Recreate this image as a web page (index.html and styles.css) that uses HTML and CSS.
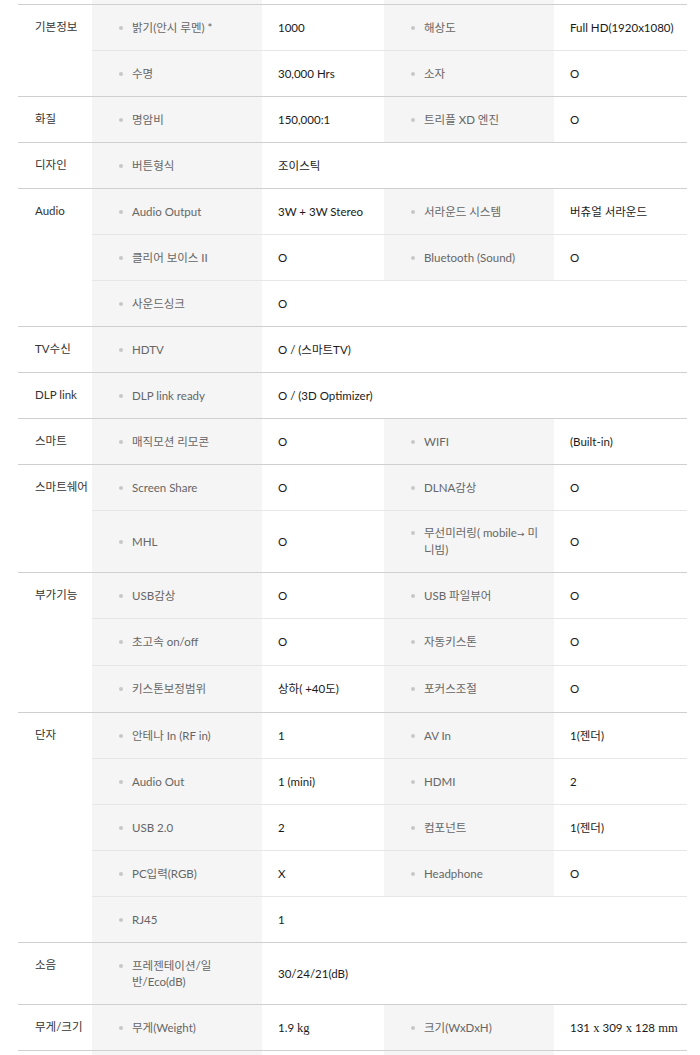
FILE: index.html
```html
<!DOCTYPE html>
<html lang="ko">
<head>
<meta charset="utf-8">
<title>제품 사양</title>
<link rel="stylesheet" href="styles.css">
</head>
<body>
<div class="spec">
<table class="spec-table">
  <colgroup>
    <col class="c-cat"><col class="c-lab"><col class="c-val"><col class="c-lab2"><col class="c-val2">
  </colgroup>
  <tbody>
    <tr class="pad-top"><td></td><td class="lab"></td><td></td><td class="lab"></td><td></td></tr>

    <tr class="first">
      <th class="cat" rowspan="2">기본정보</th>
      <td class="lab"><span class="dot"></span><span class="txt">밝기(안시 루멘) *</span></td>
      <td class="val">1000</td>
      <td class="lab"><span class="dot"></span><span class="txt">해상도</span></td>
      <td class="val">Full HD(1920x1080)</td>
    </tr>
    <tr class="last">
      <td class="lab"><span class="dot"></span><span class="txt">수명</span></td>
      <td class="val">30,000 Hrs</td>
      <td class="lab"><span class="dot"></span><span class="txt">소자</span></td>
      <td class="val">O</td>
    </tr>

    <tr class="last">
      <th class="cat">화질</th>
      <td class="lab"><span class="dot"></span><span class="txt">명암비</span></td>
      <td class="val">150,000:1</td>
      <td class="lab"><span class="dot"></span><span class="txt">트리플 XD 엔진</span></td>
      <td class="val">O</td>
    </tr>

    <tr class="last">
      <th class="cat">디자인</th>
      <td class="lab"><span class="dot"></span><span class="txt">버튼형식</span></td>
      <td class="val" colspan="3">조이스틱</td>
    </tr>

    <tr>
      <th class="cat" rowspan="3">Audio</th>
      <td class="lab"><span class="dot"></span><span class="txt">Audio Output</span></td>
      <td class="val">3W + 3W Stereo</td>
      <td class="lab"><span class="dot"></span><span class="txt">서라운드 시스템</span></td>
      <td class="val">버츄얼 서라운드</td>
    </tr>
    <tr>
      <td class="lab"><span class="dot"></span><span class="txt">클리어 보이스 II</span></td>
      <td class="val">O</td>
      <td class="lab"><span class="dot"></span><span class="txt">Bluetooth (Sound)</span></td>
      <td class="val">O</td>
    </tr>
    <tr class="last">
      <td class="lab"><span class="dot"></span><span class="txt">사운드싱크</span></td>
      <td class="val" colspan="3">O</td>
    </tr>

    <tr class="last">
      <th class="cat">TV수신</th>
      <td class="lab"><span class="dot"></span><span class="txt">HDTV</span></td>
      <td class="val" colspan="3">O / (스마트TV)</td>
    </tr>

    <tr class="last">
      <th class="cat">DLP link</th>
      <td class="lab"><span class="dot"></span><span class="txt">DLP link ready</span></td>
      <td class="val" colspan="3">O / (3D Optimizer)</td>
    </tr>

    <tr class="last">
      <th class="cat">스마트</th>
      <td class="lab"><span class="dot"></span><span class="txt">매직모션 리모콘</span></td>
      <td class="val">O</td>
      <td class="lab"><span class="dot"></span><span class="txt">WIFI</span></td>
      <td class="val">(Built-in)</td>
    </tr>

    <tr>
      <th class="cat" rowspan="2">스마트쉐어</th>
      <td class="lab"><span class="dot"></span><span class="txt">Screen Share</span></td>
      <td class="val">O</td>
      <td class="lab"><span class="dot"></span><span class="txt">DLNA감상</span></td>
      <td class="val">O</td>
    </tr>
    <tr class="last tall">
      <td class="lab"><span class="dot"></span><span class="txt">MHL</span></td>
      <td class="val">O</td>
      <td class="lab"><span class="dot"></span><span class="txt nowrap">무선미러링( mobile<span class="arrow">→</span> 미<br>니빔)</span></td>
      <td class="val">O</td>
    </tr>

    <tr>
      <th class="cat" rowspan="3">부가기능</th>
      <td class="lab"><span class="dot"></span><span class="txt">USB감상</span></td>
      <td class="val">O</td>
      <td class="lab"><span class="dot"></span><span class="txt">USB 파일뷰어</span></td>
      <td class="val">O</td>
    </tr>
    <tr class="plus1">
      <td class="lab"><span class="dot"></span><span class="txt">초고속 on/off</span></td>
      <td class="val">O</td>
      <td class="lab"><span class="dot"></span><span class="txt">자동키스톤</span></td>
      <td class="val">O</td>
    </tr>
    <tr class="last plus1">
      <td class="lab"><span class="dot"></span><span class="txt">키스톤보정범위</span></td>
      <td class="val">상하( +40도)</td>
      <td class="lab"><span class="dot"></span><span class="txt">포커스조절</span></td>
      <td class="val">O</td>
    </tr>

    <tr>
      <th class="cat" rowspan="5">단자</th>
      <td class="lab"><span class="dot"></span><span class="txt">안테나 In (RF in)</span></td>
      <td class="val">1</td>
      <td class="lab"><span class="dot"></span><span class="txt">AV In</span></td>
      <td class="val">1(젠더)</td>
    </tr>
    <tr>
      <td class="lab"><span class="dot"></span><span class="txt">Audio Out</span></td>
      <td class="val">1 (mini)</td>
      <td class="lab"><span class="dot"></span><span class="txt">HDMI</span></td>
      <td class="val">2</td>
    </tr>
    <tr>
      <td class="lab"><span class="dot"></span><span class="txt">USB 2.0</span></td>
      <td class="val">2</td>
      <td class="lab"><span class="dot"></span><span class="txt">컴포넌트</span></td>
      <td class="val">1(젠더)</td>
    </tr>
    <tr>
      <td class="lab"><span class="dot"></span><span class="txt">PC입력(RGB)</span></td>
      <td class="val">X</td>
      <td class="lab"><span class="dot"></span><span class="txt">Headphone</span></td>
      <td class="val">O</td>
    </tr>
    <tr class="last">
      <td class="lab"><span class="dot"></span><span class="txt">RJ45</span></td>
      <td class="val" colspan="3">1</td>
    </tr>

    <tr class="last tall">
      <th class="cat">소음</th>
      <td class="lab"><span class="dot"></span><span class="txt nowrap">프레젠테이션/일<br>반/Eco(dB)</span></td>
      <td class="val" colspan="3">30/24/21(dB)</td>
    </tr>

    <tr class="last">
      <th class="cat">무게/크기</th>
      <td class="lab"><span class="dot"></span><span class="txt">무게(Weight)</span></td>
      <td class="val">1.9 <span class="serif">kg</span></td>
      <td class="lab"><span class="dot"></span><span class="txt">크기(WxDxH)</span></td>
      <td class="val">131<span class="serif"> x </span>309<span class="serif"> x </span>128<span class="serif"> mm</span></td>
    </tr>

    <tr class="pad-bottom"><td></td><td class="lab"></td><td></td><td class="lab"></td><td></td></tr>
  </tbody>
</table>
</div>
</body>
</html>
```

FILE: styles.css
```css
html, body {
  margin: 0;
  padding: 0;
  background: #fff;
}

.spec {
  padding: 0 13px 0 18px;
  font-family: "Lato", "Noto Sans CJK KR", "Noto Sans", sans-serif;
  font-size: 11.5px;
  line-height: 16px;
}

.spec-table {
  width: 669px;
  border-collapse: collapse;
  table-layout: fixed;
}

.c-cat { width: 74px; }
.c-lab { width: 170px; }
.c-val { width: 122px; }
.c-lab2 { width: 170px; }
.c-val2 { width: 133px; }

.spec-table td {
  padding: 0;
  height: 45px;
  border-bottom: 1px solid #e6e6e6;
  vertical-align: middle;
  text-align: left;
  font-weight: normal;
}

.spec-table tr.plus1 td {
  height: 46px;
}

.spec-table tr.tall td {
  height: 61px;
}

.spec-table tr.last td,
.spec-table th.cat {
  border-bottom: 1px solid #cfcfcf;
}

.spec-table tr.first td,
.spec-table tr.first th {
  border-top: 1px solid #cfcfcf;
}

.pad-top td {
  height: 4px !important;
  border-bottom: 0 !important;
}

.pad-bottom td {
  height: 12px !important;
  border-bottom: 0 !important;
}

th.cat {
  height: auto;
  vertical-align: top;
  text-align: left;
  font-weight: normal;
  padding: 14px 0 0 17px;
  color: #333;
}

.lab {
  background: #f5f5f5;
  color: #666;
}

td.lab {
  padding: 0 14px 0 27px;
}

.lab .txt {
  display: block;
  margin-left: 13px;
}

.lab .nowrap {
  white-space: nowrap;
}

.arrow {
  font-family: "DejaVu Sans", sans-serif;
  font-size: 9px;
}

.lab .dot {
  float: left;
  width: 4px;
  height: 4px;
  margin-top: 6px;
  border-radius: 50%;
  background: #c8c8c8;
}

td.val {
  padding: 0 6px 0 16px;
  color: #1a1a1a;
}

.serif {
  font-family: "Liberation Serif", serif;
  font-size: 12.5px;
}
```
